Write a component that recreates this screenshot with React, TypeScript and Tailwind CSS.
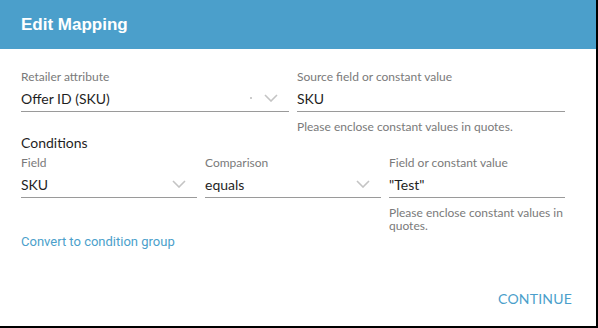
import React from 'react';

const LATO = "font-['Lato',sans-serif]";

function Chevron() {
  return (
    <svg width="14" height="8" viewBox="0 0 14 8" className="shrink-0">
      <path d="M1 1l6 6 6-6" fill="none" stroke="#c4c4c4" strokeWidth="1.6" />
    </svg>
  );
}

function Field({ label, value, select, dot, className = '' }: { label: string; value: string; select?: boolean; dot?: boolean; className?: string }) {
  return (
    <div className={className}>
      <div className="text-[12px] leading-[16px] text-[#7a7a7a]">{label}</div>
      <div className="flex items-center h-[27px] border-b border-[#9a9a9a] text-[14px] text-[#1f1f1f]">
        <span className="flex-1">{value}</span>
        {dot && <span className="w-[2px] h-[2px] bg-[#bbb] rounded-full mr-[12px]" />}
        {select && <span className="mr-[11px]"><Chevron /></span>}
      </div>
    </div>
  );
}

export default function App() {
  return (
    <div className={`w-[598px] h-[328px] bg-white border-r-2 border-b-2 border-black flex flex-col ${LATO}`}>
      <div className="h-[49px] bg-[#4b9fcb] flex items-center px-[21px] shrink-0">
        <h1 className="text-white text-[17px] font-bold font-['Liberation_Sans',Arial,sans-serif]">Edit Mapping</h1>
      </div>

      <div className="px-[21px] pt-[20px] flex-1 flex flex-col">
        <div className="flex gap-[8px] w-[544px]">
          <Field label="Retailer attribute" value="Offer ID (SKU)" select dot className="flex-1" />
          <div className="flex-1">
            <Field label="Source field or constant value" value="SKU" />
            <div className="text-[12px] leading-[14px] text-[#7a7a7a] mt-[8px]">Please enclose constant values in quotes.</div>
          </div>
        </div>

        <div className="text-[14px] text-[#1f1f1f] leading-[18px]">Conditions</div>

        <div className="flex gap-[8px] w-[544px] mt-[3px]">
          <Field label="Field" value="SKU" select className="flex-1" />
          <Field label="Comparison" value="equals" select className="flex-1" />
          <div className="flex-1">
            <Field label="Field or constant value" value={'"Test"'} />
            <div className="text-[12px] leading-[13px] text-[#7a7a7a] mt-[8px]">Please enclose constant values in quotes.</div>
          </div>
        </div>

        <button className="self-start mt-[2px] leading-[16px] text-[13px] text-[#4b9fcb] font-['Roboto',sans-serif]">Convert to condition group</button>

        <div className="flex-1 flex items-end justify-end pb-[17px] pr-[3px]">
          <button className="text-[14px] text-[#4b9fcb] tracking-[0.2px]">CONTINUE</button>
        </div>
      </div>
    </div>
  );
}
